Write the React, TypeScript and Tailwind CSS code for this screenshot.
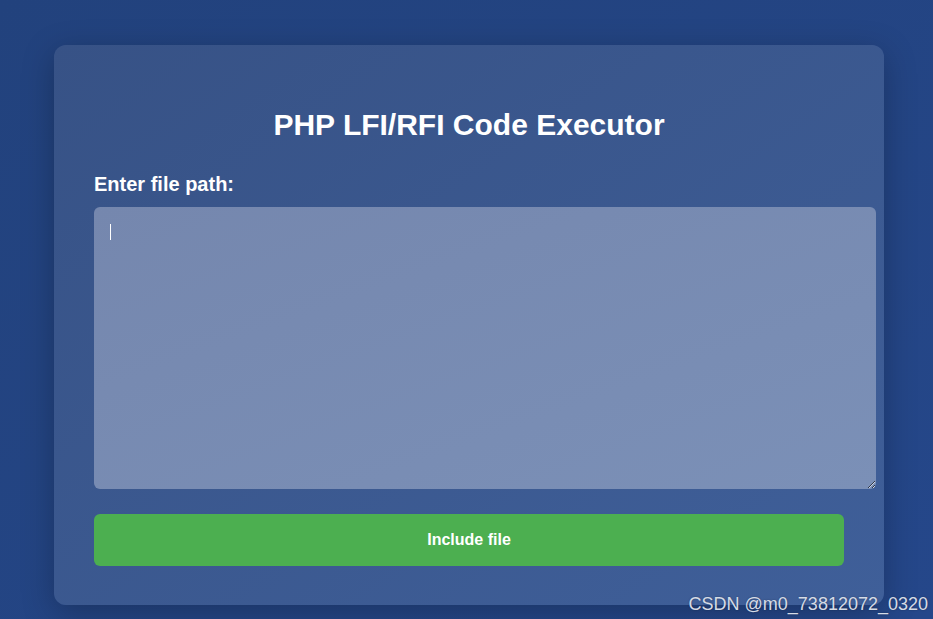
import React from "react";

export default function App() {
  return (
    <div
      className="relative w-[933px] h-[619px] overflow-hidden bg-gradient-to-br from-[#22427d] to-[#25478a]"
      style={{ fontFamily: '"Liberation Sans", Arial, sans-serif' }}
    >
      <div className="pt-[45px] pl-[54px]">
        <div className="w-[830px] h-[560px] rounded-[12px] bg-gradient-to-br from-[#375286] to-[#3f5f99] shadow-[0_8px_32px_rgba(0,0,0,0.25)] px-[40px] pt-[65px]">
          <h1 className="text-center text-white font-bold text-[30px] leading-[30px]">
            PHP LFI/RFI Code Executor
          </h1>
          <div className="mt-[34px] text-white font-bold text-[20px] leading-[20px]">
            Enter file path:
          </div>
          <div className="relative mt-[13px] w-[782px] h-[282px]">
            <textarea
              className="block w-[782px] h-[282px] rounded-[6px] bg-gradient-to-br from-[#7587ae] to-[#7b90b7] outline-none p-4 text-white"
              defaultValue=""
            />
            <span className="absolute left-[16px] top-[17px] w-px h-[16px] bg-white" />
          </div>
          <button className="mt-[25px] w-[750px] h-[52px] rounded-[6px] bg-[#4caf50] text-white font-bold text-[16px]">
            Include file
          </button>
        </div>
      </div>
      <div className="absolute right-[5px] bottom-[5px] text-[18px] leading-[20px] text-[#d5dbe6] [text-shadow:0_0_2px_rgba(0,0,0,0.3)]">
        CSDN @m0_73812072_0320
      </div>
    </div>
  );
}
